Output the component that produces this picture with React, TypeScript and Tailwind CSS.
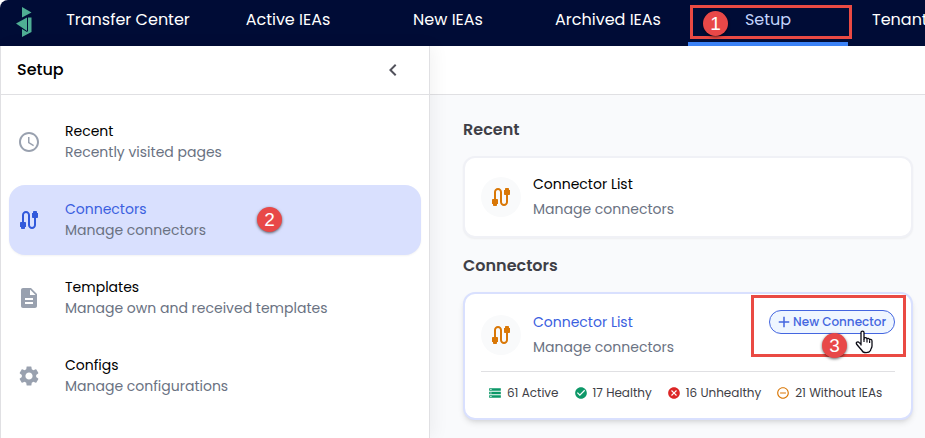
import type { ReactNode } from 'react';
import { clsx } from 'clsx';
import {
  MdAdd,
  MdCable,
  MdCancel,
  MdCheckCircle,
  MdChevronLeft,
  MdDescription,
  MdRemoveCircleOutline,
  MdSchedule,
  MdSettings,
  MdStorage,
} from 'react-icons/md';

const navItems = ['Transfer Center', 'Active IEAs', 'New IEAs', 'Archived IEAs', 'Setup', 'Tenant'];

const menuItems = [
  { title: 'Recent', desc: 'Recently visited pages', icon: <MdSchedule size={24} /> },
  { title: 'Connectors', desc: 'Manage connectors', icon: <MdCable size={24} />, active: true },
  { title: 'Templates', desc: 'Manage own and received templates', icon: <MdDescription size={24} /> },
  { title: 'Configs', desc: 'Manage configurations', icon: <MdSettings size={24} /> },
];

const stats = [
  { label: '61 Active', icon: <MdStorage size={14} className="text-[#0d9868]" /> },
  { label: '17 Healthy', icon: <MdCheckCircle size={14} className="text-[#0d9868]" /> },
  { label: '16 Unhealthy', icon: <MdCancel size={14} className="text-[#dc2626]" /> },
  { label: '21 Without IEAs', icon: <MdRemoveCircleOutline size={14} className="text-[#d97706]" /> },
];

const Logo = () => (
  <svg viewBox="0 0 16 30" className="h-[30px] w-4" aria-hidden="true">
    <g fill="#4fae94">
      <path d="M6 0 L15.5 5.5 L6 10.5Z" />
      <path d="M11 10.5 V24 L0 16.5Z" />
      <path d="M12 10.5 H15.5 V25 L6 30 V22 L11 25 L12 24Z" />
    </g>
  </svg>
);

const StepBadge = ({ step, className }: { step: number; className: string }) => (
  <span
    className={clsx(
      'absolute flex size-[25px] items-center justify-center rounded-full bg-[#e84848] font-["Liberation_Sans",sans-serif] text-[19px] leading-none text-white shadow-[0_1px_3px_rgba(0,0,0,0.6)]',
      className,
    )}
  >
    {step}
  </span>
);

const HandCursor = () => (
  <svg viewBox="0 0 18 24" className="absolute top-9 right-[38px] h-6 w-[18px]" aria-hidden="true">
    <path
      d="M6 15.5 V2.5 C6 .6 9 .6 9 2.5 V9 C9 7.2 12 7.3 12 9.2 C12 7.8 14.6 8 14.6 10 C14.6 8.9 17 9 17 11 V16 C17 18 15.5 19.3 15.5 20.5 C14 23.4 8 23.4 7 20.5 C5.5 18.5 3.5 16.8 1.5 14 C.5 12 3 11.2 4.3 12.6 L6 14.3"
      fill="#fff"
      stroke="#0a0a14"
      strokeWidth="1.3"
      strokeLinejoin="round"
    />
    <path d="M9 9 V12 M12 9.5 V12.5 M14.6 10.5 V13" stroke="#0a0a14" strokeWidth="1.2" fill="none" />
  </svg>
);

const TopNav = () => (
  <header className="flex h-[46px] overflow-hidden rounded-tl-lg bg-[#000c36]">
    <a href="#home" aria-label="Home" className="flex w-12 shrink-0 items-start justify-center pt-[7px]">
      <Logo />
    </a>
    <nav className="flex text-base">
      {navItems.map((item) => {
        const active = item === 'Setup';
        return (
          <a
            key={item}
            href="#nav"
            className={clsx(
              'relative flex w-40 shrink-0 items-center border-b-4 pb-0.5 whitespace-nowrap',
              item === 'Tenant' ? 'justify-start pl-6' : 'justify-center',
              active ? 'border-[#3b82f6] text-[#c3d3fb]' : 'border-transparent text-white',
            )}
          >
            {item}
            {active && (
              <>
                <span className="absolute top-[5px] left-0.5 h-[34px] w-[162px] border-3 border-[#ea4a43]" />
                <StepBadge step={1} className="top-[11px] left-[15px]" />
              </>
            )}
          </a>
        );
      })}
    </nav>
  </header>
);

const Sidebar = () => (
  <aside className="relative w-[430px] shrink-0 border-x border-[#e0e0e3] bg-white shadow-[4px_0_16px_rgba(0,0,0,0.05)]">
    <div className="flex h-[49px] items-center justify-between border-b border-[#e0e0e3] pr-6 pl-4">
      <h1 className="text-base font-medium text-black">Setup</h1>
      <button type="button" aria-label="Collapse menu" className="text-zinc-600">
        <MdChevronLeft size={24} />
      </button>
    </div>
    <nav className="flex flex-col gap-2 px-2 py-3">
      {menuItems.map((item) => (
        <a
          key={item.title}
          href="#setup"
          className={clsx(
            'relative flex h-[70px] items-center gap-6 rounded-2xl px-2 text-sm leading-[21px]',
            item.active && 'bg-[#d9e0fe] shadow-xs',
          )}
        >
          <span className={item.active ? 'text-[#3159db]' : 'text-gray-400'}>{item.icon}</span>
          <span>
            <span className={clsx('block', item.active ? 'text-[#3b5fe0]' : 'text-black')}>{item.title}</span>
            <span className="block text-gray-500">{item.desc}</span>
          </span>
          {item.active && <StepBadge step={2} className="top-[22px] left-[248px]" />}
        </a>
      ))}
    </nav>
  </aside>
);

const ConnectorSummary = ({ active }: { active?: boolean }) => (
  <div className="flex items-center gap-3 text-sm leading-[25px]">
    <span className="flex size-10 shrink-0 items-center justify-center rounded-full bg-gray-50 text-[#d97706]">
      <MdCable size={24} />
    </span>
    <div>
      <a href="#connectors" className={clsx('block', active ? 'text-[#3b5fe0]' : 'text-black')}>
        Connector List
      </a>
      <p className="text-gray-500">Manage connectors</p>
    </div>
  </div>
);

const Section = ({ title, children }: { title: string; children: ReactNode }) => (
  <section>
    <h2 className="mb-[14px] text-base font-semibold text-zinc-700">{title}</h2>
    {children}
  </section>
);

export default function App() {
  return (
    <div className="flex min-h-screen flex-col overflow-hidden bg-white font-[Poppins,Inter,sans-serif]">
      <TopNav />
      <div className="flex flex-1">
        <Sidebar />
        <main className="min-w-0 flex-1 bg-[#f9fafc]">
          <div className="h-[49px] border-b border-[#e0e0e3] bg-white" />
          <div className="flex flex-col gap-4 pt-[23px] pr-3 pl-[33px]">
            <Section title="Recent">
              <div className="rounded-xl border-2 border-[#f0f1f6] bg-white px-4 py-[14px] shadow-xs">
                <ConnectorSummary />
              </div>
            </Section>

            <Section title="Connectors">
              <div className="relative rounded-xl border-2 border-[#d9e0fe] bg-white px-4 pt-4 shadow-md">
                <div className="flex items-start justify-between pb-[11px]">
                  <ConnectorSummary active />
                  <button
                    type="button"
                    className="flex h-6 items-center rounded-full border border-[#4466e0] bg-[#eff6ff] pr-2 pl-[5px] text-xs font-medium whitespace-nowrap text-[#4466e0]"
                  >
                    <MdAdd size={18} />
                    New Connector
                  </button>
                </div>
                <ul className="flex gap-[15px] border-t border-[#e0e0e3] pt-3 pb-4 pl-[7px] text-xs leading-[18px] whitespace-nowrap text-zinc-700">
                  {stats.map((stat) => (
                    <li key={stat.label} className="flex items-center gap-[5px]">
                      {stat.icon}
                      {stat.label}
                    </li>
                  ))}
                </ul>

                <span className="pointer-events-none absolute top-px right-[5px] h-[62px] w-[155px] border-3 border-[#ea4a43]" />
                <StepBadge step={3} className="top-[39px] right-16" />
                <HandCursor />
              </div>
            </Section>
          </div>
        </main>
      </div>
    </div>
  );
}
